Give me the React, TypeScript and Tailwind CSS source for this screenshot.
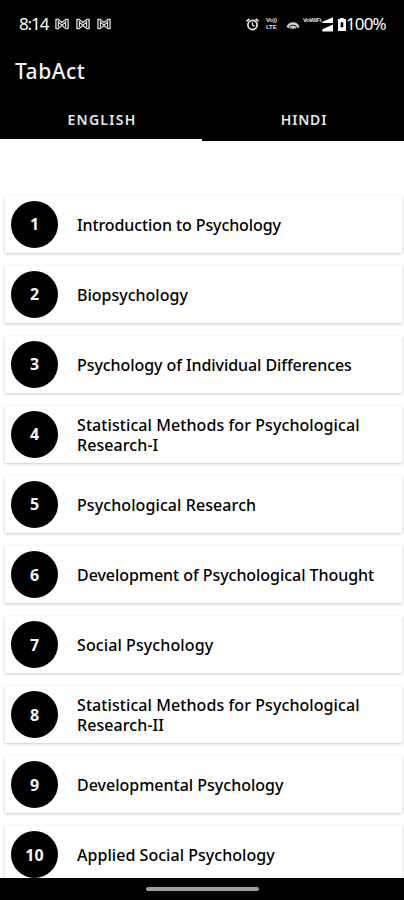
import clsx from "clsx";

interface Subject {
  id: number;
  title: string;
  tracking: string;
}

const subjects: Subject[] = [
  { id: 1, title: "Introduction to Psychology", tracking: "tracking-[-0.1px]" },
  { id: 2, title: "Biopsychology", tracking: "tracking-[0px]" },
  { id: 3, title: "Psychology of Individual Differences", tracking: "tracking-[-0.07px]" },
  { id: 4, title: "Statistical Methods for Psychological Research-I", tracking: "tracking-[0.08px]" },
  { id: 5, title: "Psychological Research", tracking: "tracking-[0.09px]" },
  { id: 6, title: "Development of Psychological Thought", tracking: "tracking-[-0.05px]" },
  { id: 7, title: "Social Psychology", tracking: "tracking-[0.1px]" },
  { id: 8, title: "Statistical Methods for Psychological Research-II", tracking: "tracking-[0.08px]" },
  { id: 9, title: "Developmental Psychology", tracking: "tracking-[0px]" },
  { id: 10, title: "Applied Social Psychology", tracking: "tracking-[0.04px]" },
];

function MailIcon() {
  return (
    <svg viewBox="0 0 14 12" className="h-3 w-3.5" fill="none" stroke="#dcdcdc" strokeLinejoin="round">
      <path d="M.9 1.5v9h2.4L7 7.6l3.7 2.9h2.4v-9h-2.4L7 4.4 3.3 1.5z" strokeWidth="1.3" />
      <path d="M3.4 3v6M10.6 3v6M3.6 4.4 7 6.9l3.4-2.5" strokeWidth="1.2" />
    </svg>
  );
}

function AlarmIcon() {
  return (
    <svg viewBox="0 0 13 13" className="h-[13px] w-[13px]" fill="none" stroke="#e8e8e8" strokeWidth="1.7">
      <circle cx="6.5" cy="7" r="4.6" />
      <path d="M6.5 4.3V7l2 1.4" strokeWidth="1.3" />
      <path d="M.6 3.4 3.4.8M12.4 3.4 9.6.8" />
    </svg>
  );
}

function HotspotIcon() {
  return (
    <svg viewBox="0 0 14 11" className="h-[11px] w-3.5" fill="none" stroke="#cfcfcf">
      <path d="M1.7 8.6A5.5 5.5 0 0 1 12.3 8.6" strokeWidth="2.4" />
      <path d="M4.2 9.4A3 3 0 0 1 9.8 9.4" strokeWidth="2" />
      <circle cx="7" cy="9" r="1.1" fill="#cfcfcf" stroke="none" />
    </svg>
  );
}

function SignalIcon() {
  return (
    <svg viewBox="0 0 11 15" className="h-[15px] w-[11px]" fill="#fff">
      <path d="M11 .3v5.7H.3v-1.2zM11 7.5v7H.3v-2.2z" />
    </svg>
  );
}

function BatteryIcon() {
  return (
    <svg viewBox="0 0 8 13" className="h-[13px] w-2" fill="#fff">
      <path d="M2.2 0h3.6v1H8v12H0V1h2.2z" />
      <path d="M2.7 4.3h2.6v5H2.7z" fill="#000" />
    </svg>
  );
}

function StatusBar() {
  return (
    <div className="flex h-12 items-center pl-[19px] text-white">
      <span className="w-[30px] text-[17px] leading-5 tracking-[-1.1px]">8:14</span>
      <div className="ml-1.5 flex gap-[7px]">
        <MailIcon />
        <MailIcon />
        <MailIcon />
      </div>
      <div className="ml-auto flex h-5 w-[158px] items-center">
        <AlarmIcon />
        <div className="ml-[7px] w-[14px] whitespace-nowrap font-['Liberation_Sans',sans-serif] text-[6px] font-bold leading-[7px] tracking-[-0.1px] text-neutral-200">
          <div>Vo))</div>
          <div>LTE</div>
        </div>
        <div className="ml-[6px]">
          <HotspotIcon />
        </div>
        <span className="mb-[7px] ml-[3px] w-[19px] whitespace-nowrap font-['Liberation_Sans',sans-serif] text-[6px] font-bold leading-[7px] tracking-[-0.3px] text-neutral-200">
          VoWiFi
        </span>
        <SignalIcon />
        <div className="ml-[5px]">
          <BatteryIcon />
        </div>
        <span className="text-[17px] leading-5 tracking-[-0.9px]">100%</span>
      </div>
    </div>
  );
}

function Tab({ label, active }: { label: string; active?: boolean }) {
  return (
    <button
      type="button"
      className={clsx(
        "w-1/2 border-b-2 pl-0.5 pt-1 text-center text-sm font-semibold text-neutral-200",
        active ? "border-white tracking-[1.25px]" : "border-black tracking-[0.8px]"
      )}
    >
      {label}
    </button>
  );
}

function SubjectCard({ id, title, tracking }: Subject) {
  return (
    <li className="flex h-[57px] shrink-0 items-center bg-white pl-1.5 shadow-[0_1px_3px_rgba(0,0,0,0.22)]">
      <div className="flex h-[47px] w-[47px] shrink-0 items-center justify-center rounded-full bg-black text-base font-bold text-neutral-100">
        {id}
      </div>
      <p className={clsx("ml-[19px] w-[310px] pt-px text-base font-medium leading-5 text-black", tracking)}>{title}</p>
    </li>
  );
}

export default function App() {
  return (
    <div className="flex h-[900px] w-[404px] flex-col overflow-hidden bg-white font-['Noto_Sans','Open_Sans',sans-serif]">
      <header className="flex h-[141px] shrink-0 flex-col bg-black">
        <StatusBar />
        <h1 className="flex h-12 items-center pl-[15px] text-[21px] font-medium tracking-[0.5px] text-neutral-100">TabAct</h1>
        <nav className="flex flex-1">
          <Tab label="ENGLISH" active />
          <Tab label="HINDI" />
        </nav>
      </header>

      <main className="min-h-0 flex-1 overflow-hidden">
        <ul className="flex flex-col gap-[13.1px] pl-[5px] pr-[2px] pt-[54.6px]">
          {subjects.map((subject) => (
            <SubjectCard key={subject.id} {...subject} />
          ))}
        </ul>
      </main>

      <footer className="flex h-[22px] shrink-0 items-center justify-center bg-black">
        <div className="h-1 w-[113px] rounded-full bg-neutral-400" />
      </footer>
    </div>
  );
}
